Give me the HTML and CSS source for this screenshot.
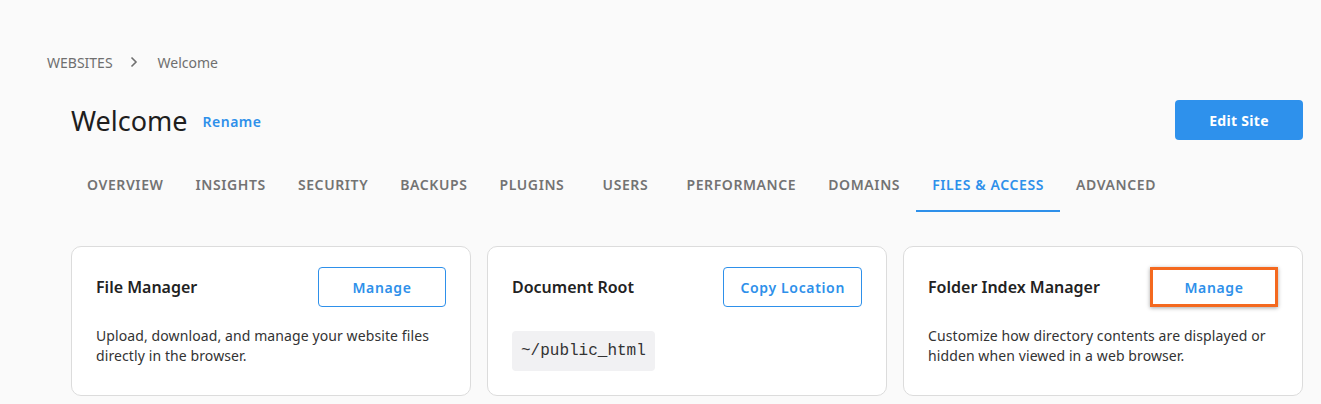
FILE: index.html
```html
<!DOCTYPE html>
<html lang="en">
  <head>
    <meta charset="UTF-8" />
    <meta name="viewport" content="width=device-width, initial-scale=1.0" />
    <title>Welcome - Files &amp; Access</title>
    <link rel="stylesheet" href="styles.css">
  </head>
  <body>
    <div class="page">
      <nav class="breadcrumb">
        <a href="#">WEBSITES</a>
        <svg class="chevron" width="8" height="12" viewBox="0 0 8 12">
          <path d="M1.5 1.5 L6 6 L1.5 10.5" fill="none" stroke="#6f6f6f" stroke-width="1.6" />
        </svg>
        <span>Welcome</span>
      </nav>

      <div class="main">
        <div class="header">
          <div class="title-wrap">
            <h1>Welcome</h1>
            <a href="#" class="link">Rename</a>
          </div>
          <button class="btn-primary">Edit Site</button>
        </div>

        <ul class="tabs">
          <li>OVERVIEW</li>
          <li>INSIGHTS</li>
          <li>SECURITY</li>
          <li>BACKUPS</li>
          <li>PLUGINS</li>
          <li>USERS</li>
          <li>PERFORMANCE</li>
          <li>DOMAINS</li>
          <li class="active">FILES &amp; ACCESS</li>
          <li>ADVANCED</li>
        </ul>

        <div class="cards">
          <div class="card">
            <div class="card-head">
              <h2>File Manager</h2>
              <button class="btn-outline">Manage</button>
            </div>
            <p>Upload, download, and manage your website files directly in the browser.</p>
          </div>
          <div class="card">
            <div class="card-head">
              <h2>Document Root</h2>
              <button class="btn-outline">Copy Location</button>
            </div>
            <code class="path">~/public_html</code>
          </div>
          <div class="card">
            <div class="card-head">
              <h2>Folder Index Manager</h2>
              <button class="btn-outline highlight">Manage</button>
            </div>
            <p>Customize how directory contents are displayed or hidden when viewed in a web browser.</p>
          </div>
        </div>
      </div>
    </div>
  </body>
</html>
```

FILE: styles.css
```css
body {
  font-family: "Noto Sans", "Open Sans", Arial, sans-serif;
  background-color: #fafafa;
  color: #222;
  margin: 0;
  padding: 0;
}
.page {
  padding: 52px 18px 0 47px;
}
.breadcrumb {
  display: flex;
  align-items: center;
  font-size: 14px;
  color: #6f6f6f;
  height: 20px;
}
.breadcrumb a {
  color: #6f6f6f;
  text-decoration: none;
}
.chevron {
  margin: 0 20px 0 17px;
}
.main {
  margin-left: 24px;
}
.header {
  display: flex;
  justify-content: space-between;
  align-items: center;
  margin-top: 28px;
}
.title-wrap {
  display: flex;
  align-items: center;
}
h1 {
  font-size: 27px;
  font-weight: 400;
  color: #1e1e1e;
  margin: 0 15px 0 0;
}
.link {
  color: #2e90ea;
  font-size: 14px;
  font-weight: 600;
  letter-spacing: 0.5px;
  text-decoration: none;
  margin-top: 2px;
}
.btn-primary {
  background-color: #2e91ec;
  color: #fff;
  border: none;
  border-radius: 4px;
  width: 128px;
  height: 40px;
  font-family: inherit;
  font-size: 14px;
  font-weight: 700;
  letter-spacing: 0.3px;
  cursor: pointer;
}
.tabs {
  display: flex;
  list-style: none;
  margin: 20px 0 0 0;
  padding: 0;
}
.tabs li {
  min-width: 90px;
  box-sizing: border-box;
  padding: 0 16px;
  height: 52px;
  line-height: 50px;
  text-align: center;
  font-size: 14px;
  font-weight: 600;
  letter-spacing: 0.6px;
  color: #737373;
  border-bottom: 2px solid transparent;
}
.tabs li.active {
  color: #2e90ea;
  border-bottom-color: #2e90ea;
}
.cards {
  display: grid;
  grid-template-columns: repeat(3, 1fr);
  gap: 16px;
  margin-top: 34px;
}
.card {
  box-sizing: border-box;
  background-color: #fff;
  border: 1px solid #dcdcdc;
  border-radius: 10px;
  padding: 20px 24px 24px 24px;
  height: 150px;
}
.card-head {
  display: flex;
  justify-content: space-between;
  align-items: center;
}
h2 {
  font-size: 16px;
  font-weight: 600;
  color: #222;
  margin: 0;
}
.btn-outline {
  background-color: #fff;
  color: #2e90ea;
  border: 1px solid #2e90ea;
  border-radius: 4px;
  min-width: 128px;
  height: 40px;
  padding: 0 16px;
  font-family: inherit;
  font-size: 14px;
  font-weight: 600;
  letter-spacing: 0.65px;
  cursor: pointer;
}
.btn-outline.highlight {
  border: 3px solid #f4691f;
  border-radius: 0;
  box-shadow: 0 1px 4px rgba(0, 0, 0, 0.35);
}
.card p {
  font-size: 14px;
  line-height: 20px;
  letter-spacing: 0.1px;
  color: #333;
  margin: 19px 0 0 0;
}
.path {
  display: inline-block;
  margin-top: 24px;
  background-color: #f1f1f3;
  border-radius: 4px;
  padding: 0 9px;
  height: 40px;
  line-height: 40px;
  font-family: "Courier New", "Liberation Mono", monospace;
  font-size: 16px;
  color: #333;
}
```
